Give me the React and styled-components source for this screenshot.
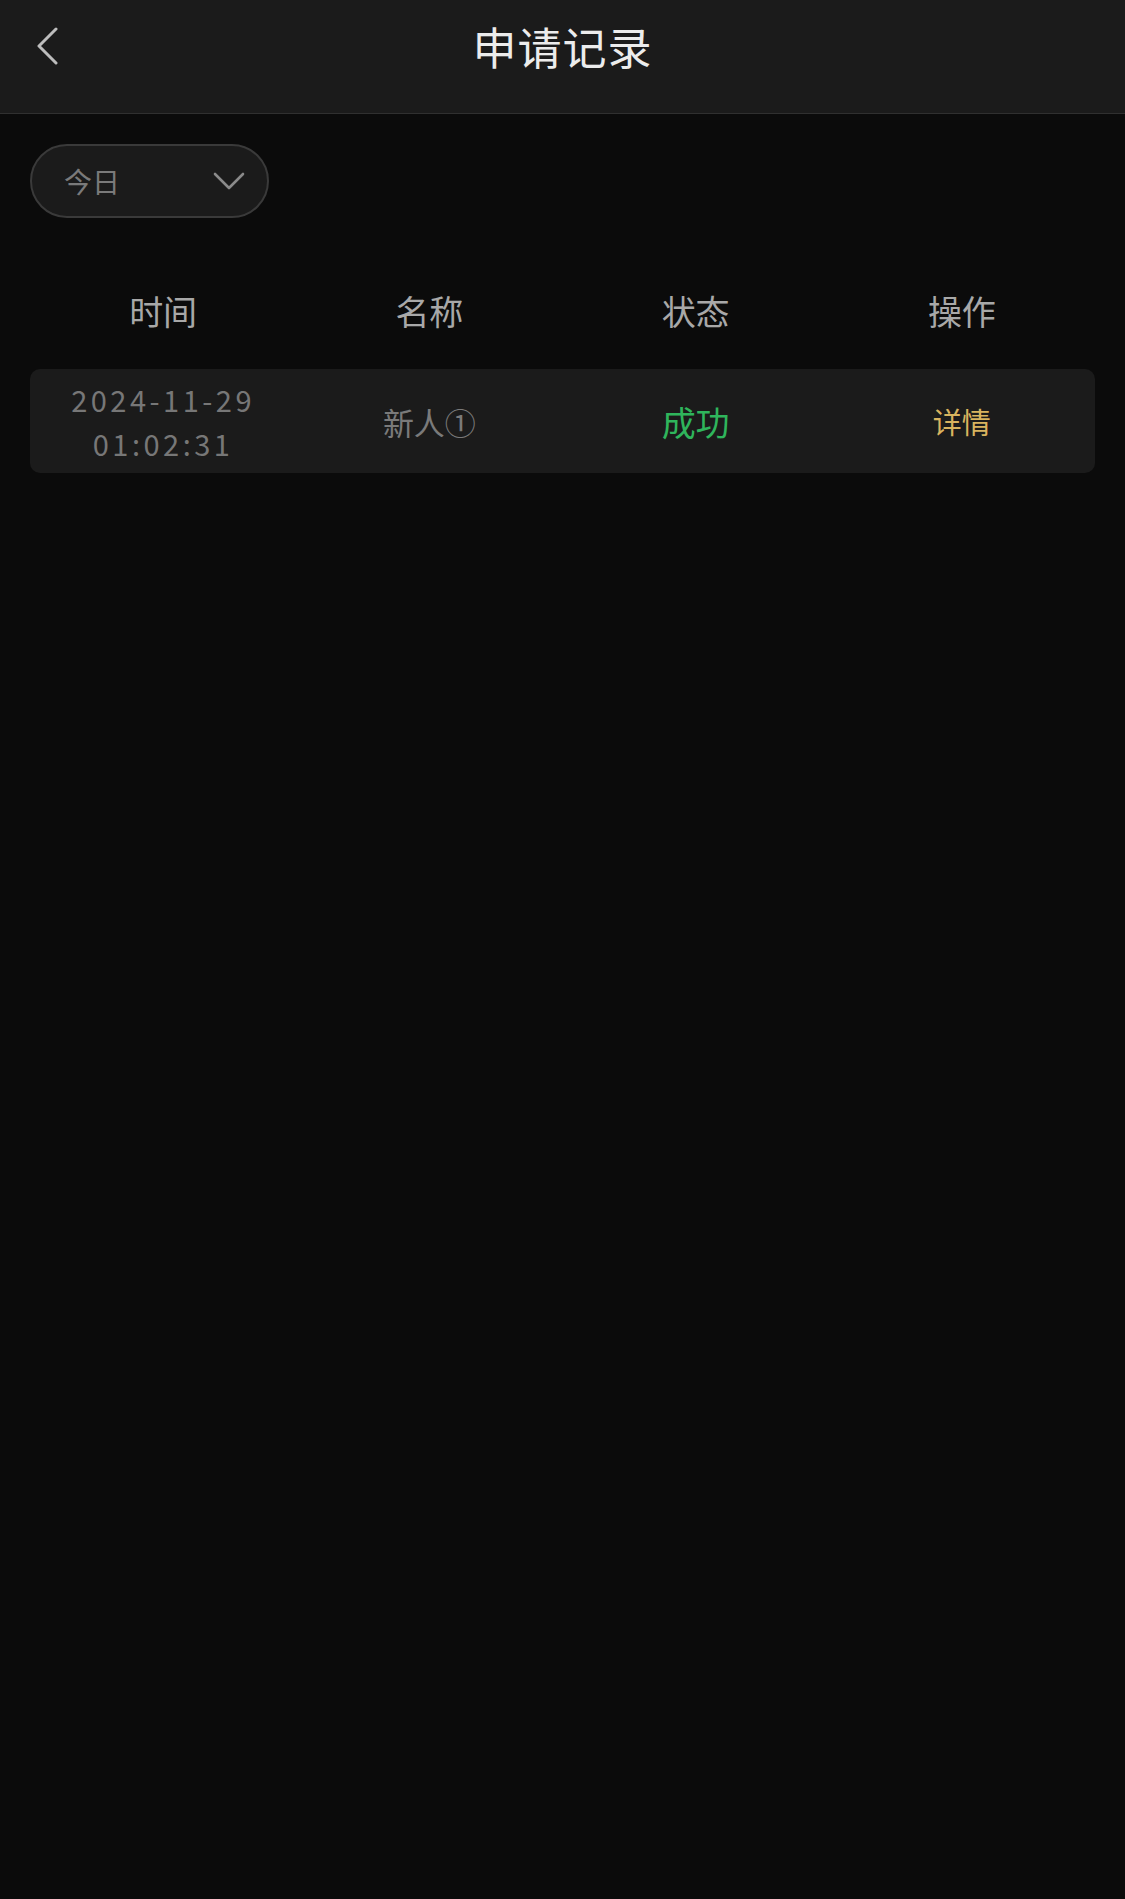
import React from 'react';
import styled, { createGlobalStyle } from 'styled-components';

const GlobalStyle = createGlobalStyle`
  html, body {
    margin: 0;
    padding: 0;
    background: #0b0b0b;
  }
  body {
    font-family: 'Noto Sans CJK SC', 'Noto Sans', sans-serif;
  }
`;

const records = [
  { date: '2024-11-29', time: '01:02:31', name: '新人①', status: '成功', action: '详情' },
];

function App() {
  return (
    <>
      <GlobalStyle />
      <Page>
        <Header>
          <BackButton aria-label="返回">
            <svg width="26" height="38" viewBox="0 0 26 38" fill="none">
              <path d="M22 2 L5 19 L22 36" stroke="#bdbdbd" strokeWidth="3" strokeLinecap="round" strokeLinejoin="round" />
            </svg>
          </BackButton>
          <Title>申请记录</Title>
          <span />
        </Header>
        <Content>
          <Select>
            <SelectLabel>今日</SelectLabel>
            <svg width="32" height="19" viewBox="0 0 32 19" fill="none">
              <path d="M2 2 L16 16 L30 2" stroke="#8a8a8a" strokeWidth="2.6" strokeLinecap="round" strokeLinejoin="round" />
            </svg>
          </Select>
          <TableHead>
            <HeadCell>时间</HeadCell>
            <HeadCell>名称</HeadCell>
            <HeadCell>状态</HeadCell>
            <HeadCell>操作</HeadCell>
          </TableHead>
          {records.map((r, i) => (
            <Row key={i}>
              <Cell>
                <DateText>
                  {r.date}
                  <br />
                  {r.time}
                </DateText>
              </Cell>
              <Cell>
                <NameText>{r.name}</NameText>
              </Cell>
              <Cell>
                <StatusText>{r.status}</StatusText>
              </Cell>
              <Cell>
                <ActionText>{r.action}</ActionText>
              </Cell>
            </Row>
          ))}
        </Content>
      </Page>
    </>
  );
}

export default App;

const Page = styled.div`
  min-height: 1899px;
  background: #0b0b0b;
`;

const Header = styled.header`
  height: 114px;
  box-sizing: border-box;
  display: grid;
  grid-template-columns: 120px 1fr 120px;
  align-items: center;
  background: #1b1b1b;
  border-bottom: 1px solid #303030;
  padding-bottom: 22px;
`;

const BackButton = styled.div`
  display: flex;
  align-items: center;
  padding-left: 34px;
`;

const Title = styled.h1`
  margin: 0;
  text-align: center;
  font-size: 44px;
  font-weight: 400;
  color: #ececec;
  letter-spacing: 1px;
`;

const Content = styled.main`
  padding: 30px 30px 0;
`;

const Select = styled.div`
  width: 239px;
  height: 74px;
  box-sizing: border-box;
  display: flex;
  align-items: center;
  justify-content: space-between;
  padding: 0 22px 0 32px;
  border: 2px solid #3a3a3a;
  border-radius: 37px;
  background: #1b1b1b;
`;

const SelectLabel = styled.span`
  font-size: 28px;
  color: #7a7a7a;
`;

const TableHead = styled.div`
  margin-top: 52px;
  height: 80px;
  display: grid;
  grid-template-columns: repeat(4, 1fr);
  align-items: center;
`;

const HeadCell = styled.div`
  text-align: center;
  font-size: 34px;
  color: #a8a8a8;
`;

const Row = styled.div`
  margin-top: 19px;
  height: 104px;
  display: grid;
  grid-template-columns: repeat(4, 1fr);
  align-items: center;
  background: #1b1b1b;
  border-radius: 10px;
`;

const Cell = styled.div`
  display: flex;
  justify-content: center;
  align-items: center;
  text-align: center;
`;

const DateText = styled.div`
  font-size: 29px;
  line-height: 44px;
  color: #777;
  letter-spacing: 3.5px;
`;

const NameText = styled.span`
  font-size: 31px;
  color: #7a7a7a;
`;

const StatusText = styled.span`
  font-size: 34px;
  color: #2fb55c;
`;

const ActionText = styled.span`
  font-size: 29px;
  color: #d9b45f;
`;
